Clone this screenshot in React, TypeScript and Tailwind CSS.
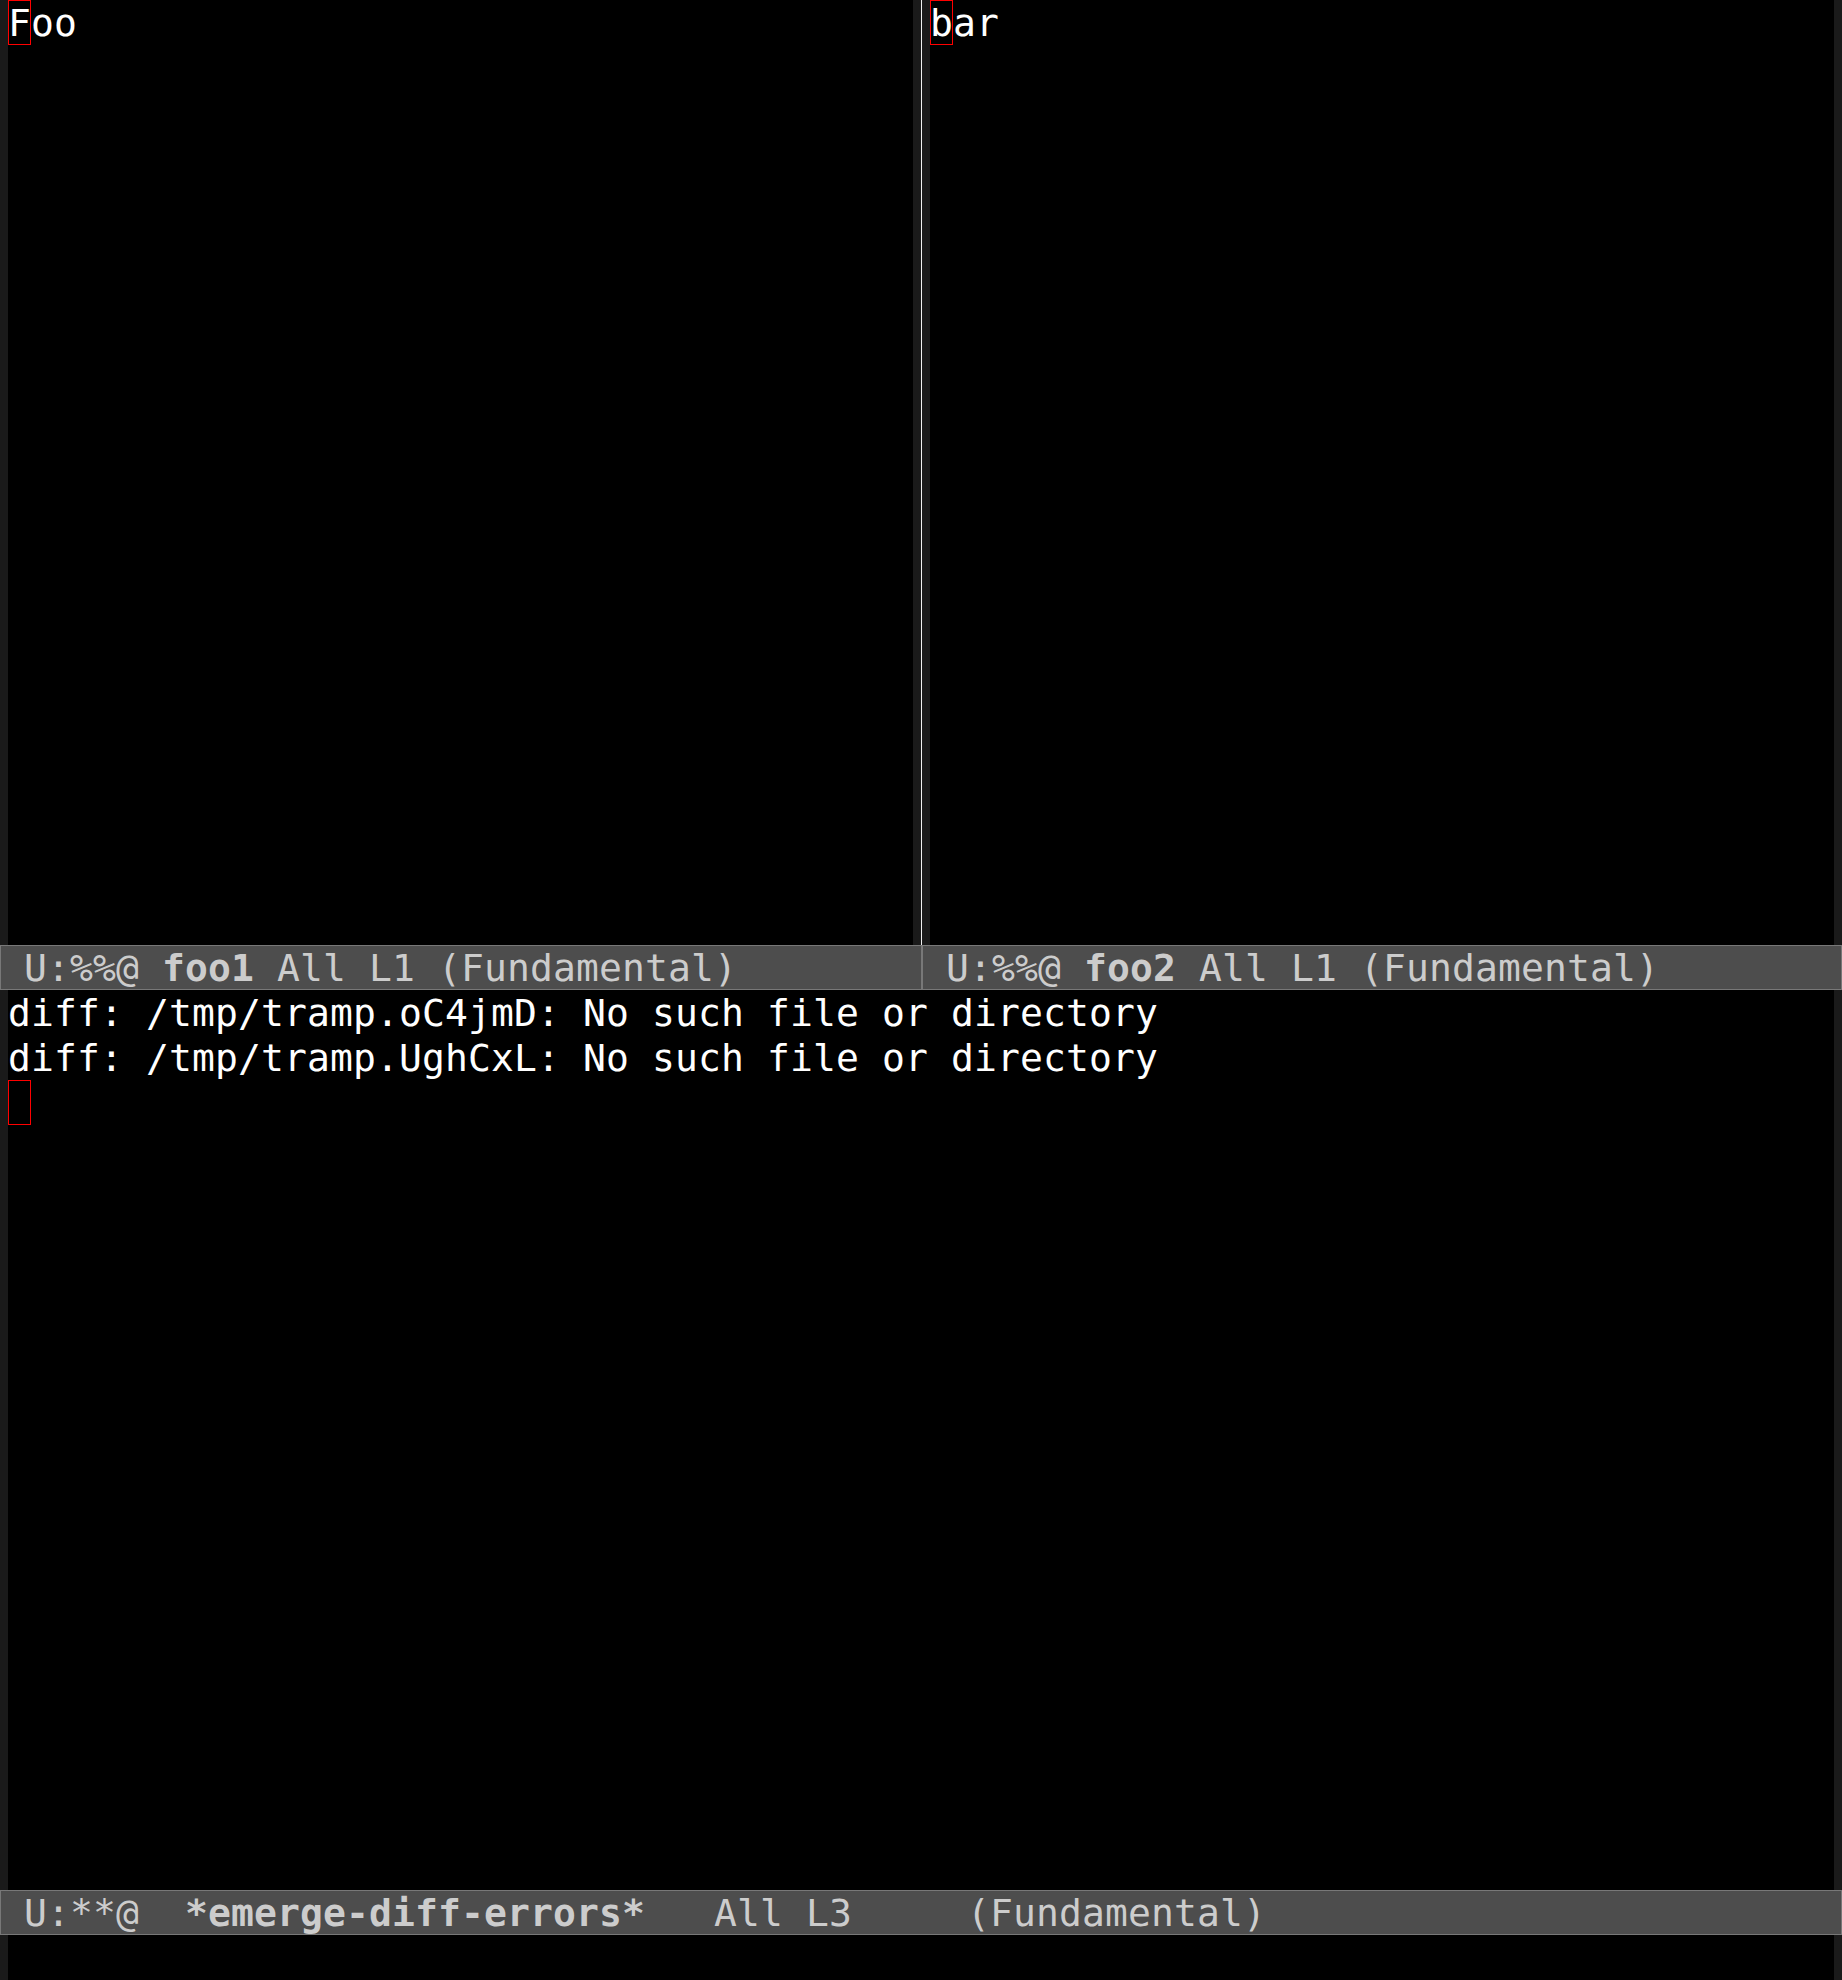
import React from "react";

const Fringe = () => <div className="w-[8px] shrink-0 bg-[#1a1a1a]" />;

const Cursor = ({ ch }: { ch: string }) => (
  <span className="inline-block w-[23px] h-[45px] align-top leading-[47px] shadow-[inset_0_0_0_1px_#ff0000]">{ch}</span>
);

const ModeLine = ({ children, className = "" }: { children: React.ReactNode; className?: string }) => (
  <div
    className={
      "h-[45px] border border-[#787878] bg-[#4d4d4d] text-[#cccccc] leading-[45px] whitespace-pre overflow-hidden " +
      className
    }
  >
    {children}
  </div>
);

export default function App() {
  return (
    <div className="w-[1842px] h-[1980px] bg-black flex flex-col overflow-hidden font-['DejaVu_Sans_Mono','Liberation_Mono',monospace] text-[38px] leading-[47px] tracking-[0.12px] text-white">
      {/* top windows */}
      <div className="flex h-[945px]">
        <div className="flex w-[921px]">
          <Fringe />
          <div className="flex-1 whitespace-pre">
            <div className="h-[45px]">
              <Cursor ch="F" />
              oo
            </div>
          </div>
          <Fringe />
        </div>
        <div className="w-[1px] bg-[#f0f0f0]" />
        <div className="flex flex-1">
          <Fringe />
          <div className="flex-1 whitespace-pre">
            <div className="h-[45px]">
              <Cursor ch="b" />
              ar
            </div>
          </div>
          <Fringe />
        </div>
      </div>
      {/* top mode lines */}
      <div className="flex h-[45px]">
        <ModeLine className="w-[922px]">
          {" U:%%@ "}
          <span className="font-bold">foo1</span>
          {" All L1 (Fundamental)"}
        </ModeLine>
        <ModeLine className="flex-1">
          {" U:%%@ "}
          <span className="font-bold">foo2</span>
          {" All L1 (Fundamental)"}
        </ModeLine>
      </div>
      {/* bottom window */}
      <div className="flex h-[900px]">
        <Fringe />
        <div className="flex-1 whitespace-pre">
          <div className="h-[45px]">diff: /tmp/tramp.oC4jmD: No such file or directory</div>
          <div className="h-[45px]">diff: /tmp/tramp.UghCxL: No such file or directory</div>
          <div className="h-[45px]">
            <Cursor ch=" " />
          </div>
        </div>
        <Fringe />
      </div>
      <ModeLine>
        {" U:**@  "}
        <span className="font-bold">*emerge-diff-errors*</span>
        {"   All L3     (Fundamental)"}
      </ModeLine>
      {/* minibuffer */}
      <div className="flex h-[45px]">
        <Fringe />
        <div className="flex-1" />
        <Fringe />
      </div>
    </div>
  );
}
